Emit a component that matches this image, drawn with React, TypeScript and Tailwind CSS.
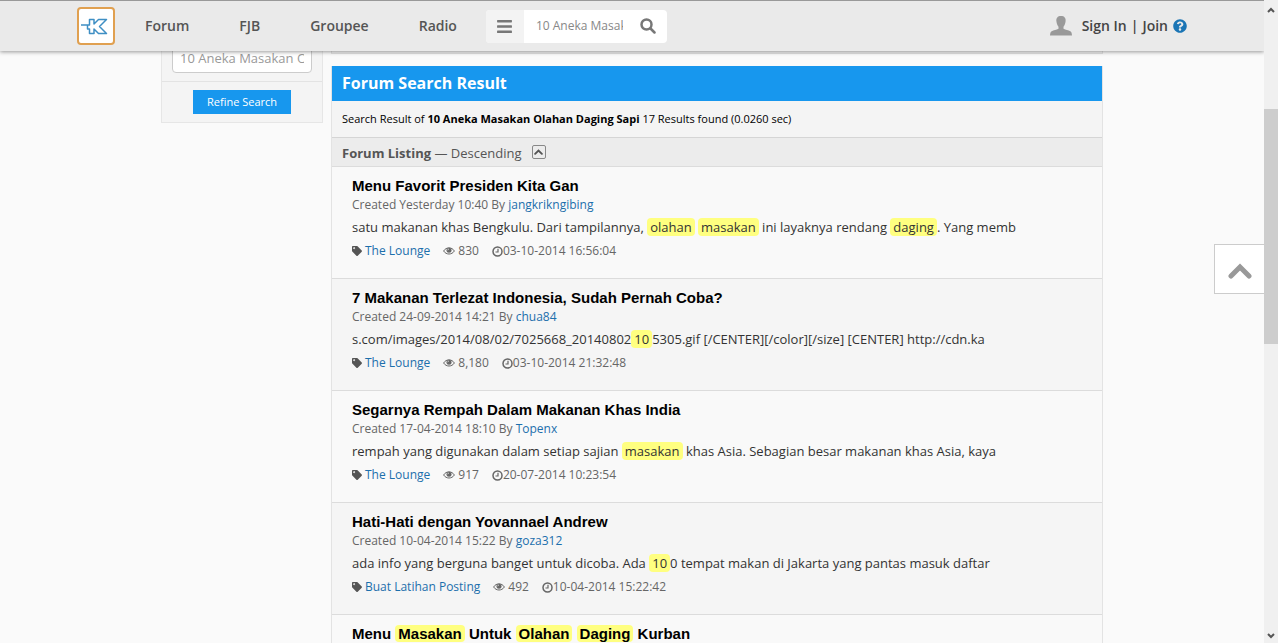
import React from 'react';
import { FaBars, FaQuestionCircle, FaTag } from 'react-icons/fa';

interface Thread {
  title: string;
  created: string;
  author: string;
  excerpt: string;
  forum: string;
  views: string;
  updated: string;
}

// words between [[ ]] are search hits
const threads: Thread[] = [
  {
    title: 'Menu Favorit Presiden Kita Gan',
    created: 'Yesterday 10:40',
    author: 'jangkrikngibing',
    excerpt:
      'satu makanan khas Bengkulu. Dari tampilannya, [[olahan]] [[masakan]] ini layaknya rendang [[daging]]. Yang memb',
    forum: 'The Lounge',
    views: '830',
    updated: '03-10-2014 16:56:04',
  },
  {
    title: '7 Makanan Terlezat Indonesia, Sudah Pernah Coba?',
    created: '24-09-2014 14:21',
    author: 'chua84',
    excerpt:
      's.com/images/2014/08/02/7025668_20140802[[10]]5305.gif [/CENTER][/color][/size] [CENTER] http://cdn.ka',
    forum: 'The Lounge',
    views: '8,180',
    updated: '03-10-2014 21:32:48',
  },
  {
    title: 'Segarnya Rempah Dalam Makanan Khas India',
    created: '17-04-2014 18:10',
    author: 'Topenx',
    excerpt:
      'rempah yang digunakan dalam setiap sajian [[masakan]] khas Asia. Sebagian besar makanan khas Asia, kaya',
    forum: 'The Lounge',
    views: '917',
    updated: '20-07-2014 10:23:54',
  },
  {
    title: 'Hati-Hati dengan Yovannael Andrew',
    created: '10-04-2014 15:22',
    author: 'goza312',
    excerpt:
      'ada info yang berguna banget untuk dicoba. Ada [[10]]0 tempat makan di Jakarta yang pantas masuk daftar',
    forum: 'Buat Latihan Posting',
    views: '492',
    updated: '10-04-2014 15:22:42',
  },
];

const Highlighted: React.FC<{ text: string }> = ({ text }) => (
  <>
    {text.split(/\[\[(.+?)\]\]/).map((part, i) =>
      i % 2 ? (
        <mark key={i} className="rounded-sm bg-[#ffff80] px-[3px] text-inherit">
          {part}
        </mark>
      ) : (
        <React.Fragment key={i}>{part}</React.Fragment>
      )
    )}
  </>
);

const Logo = () => (
  <svg viewBox="0 0 38 38" className="h-[38px] w-[38px]" fill="none">
    <rect x="1" y="1" width="36" height="36" rx="3" fill="#fff" stroke="#e0a050" strokeWidth="2" />
    <path
      d="M4 18h8.500v-5.500h4.500v4.500l4.500-4.500h8l-7 7 7 7h-8L17 22v4.500h-4.500v-4.500h-2V18"
      stroke="#3f8fc4"
      strokeWidth="1.500"
      strokeLinejoin="round"
    />
  </svg>
);

const UserIcon = () => (
  <svg viewBox="0 0 22 20" className="h-5 w-[22px]" fill="#999">
    <path d="M11 0c3.300 0 5 2 4.600 5.300C15.300 8 14.500 9.600 13.500 10.700v2c2 1 5 1.500 6.800 2.600 1 .6 1.500 1.500 1.700 4.200H0c.2-2.700.7-3.600 1.700-4.200 1.800-1.100 4.800-1.600 6.800-2.600v-2C7.500 9.600 6.700 8 6.400 5.300 6 2 7.700 0 11 0z" />
  </svg>
);

const SearchIcon = () => (
  <svg viewBox="0 0 16 16" className="h-4 w-4" fill="none" stroke="currentColor" strokeLinecap="round">
    <circle cx="6.500" cy="6.500" r="5" strokeWidth="2.500" />
    <path d="M10.500 10.500l4 4" strokeWidth="2.500" />
  </svg>
);

const EyeIcon = () => (
  <svg viewBox="0 0 12 10" className="mr-[3px] h-[10px] w-3" fill="none" stroke="currentColor">
    <path d="M.6 5C3.200.8 8.800.8 11.400 5 8.800 9 3.200 9 .6 5z" />
    <circle cx="6" cy="4.300" r="2.500" fill="currentColor" stroke="none" />
    <path d="M4.700 4.300A1.300 1.300 0 0 1 6 3" stroke="#fff" strokeWidth=".6" />
  </svg>
);

const ClockIcon = () => (
  <svg viewBox="0 0 11 11" className="h-[11px] w-[11px]" fill="none" stroke="currentColor" strokeWidth="1.500">
    <circle cx="5.500" cy="5.500" r="4.500" />
    <path d="M6 2.800v3.200H3.500" strokeWidth="1.200" />
  </svg>
);

const Chevron: React.FC<{ className: string }> = ({ className }) => (
  <svg
    viewBox="0 0 24 16"
    className={className}
    fill="none"
    stroke="currentColor"
    strokeWidth="5"
    strokeLinecap="round"
    strokeLinejoin="miter"
  >
    <path d="M3 13l9-9 9 9" />
  </svg>
);

const Header = () => (
  <header className="relative z-10 border-t border-[#999] bg-[#eaeaea] shadow-[0_1px_4px_rgba(0,0,0,0.4)]">
    <div className="mx-auto flex h-[50px] max-w-[1110px] items-center">
      <a href="#home" aria-label="Home">
        <Logo />
      </a>
      <nav className="ml-[30px] flex gap-[50px] text-sm font-semibold text-[#555]">
        <a href="#forum">Forum</a>
        <a href="#fjb">FJB</a>
        <a href="#groupee">Groupee</a>
        <a href="#radio">Radio</a>
      </nav>
      <form className="ml-[29px] flex h-[33px] items-center overflow-hidden rounded-sm bg-white">
        <button
          type="button"
          aria-label="Categories"
          className="flex h-full w-[38px] items-center justify-center bg-[#f3f3f3] text-[#777]"
        >
          <FaBars className="h-[17px] w-[17px]" />
        </button>
        <input
          aria-label="Search"
          defaultValue="10 Aneka Masakan Olahan Daging Sapi"
          className="ml-3 w-[87px] text-xs text-[#888] outline-none"
        />
        <button type="button" aria-label="Submit search" className="mr-[11px] ml-[17px] text-[#777]">
          <SearchIcon />
        </button>
      </form>
      <div className="ml-auto flex items-center text-sm font-semibold text-[#444]">
        <UserIcon />
        <a href="#signin" className="ml-[10px]">
          Sign In
        </a>
        <span className="mx-1">|</span>
        <a href="#join">Join</a>
        <a href="#help" aria-label="Help" className="ml-[5px] text-[#1b75b5]">
          <FaQuestionCircle className="h-[14px] w-[14px]" />
        </a>
      </div>
    </div>
  </header>
);

const Sidebar = () => (
  <aside className="-mt-[12px] w-[162px] shrink-0 self-start border border-t-0 border-[#e6e6e6] bg-[#f4f4f4]">
    <div className="border-b border-[#e3e3e3] px-[10px] pt-1 pb-2">
      <input
        aria-label="Keyword"
        defaultValue="10 Aneka Masakan Olahan Daging Sapi"
        className="h-[30px] w-full rounded-sm border border-[#ccc] bg-white px-[7px] text-[13px] text-[#999] outline-none"
      />
    </div>
    <div className="flex justify-center py-2">
      <button type="button" className="h-6 bg-[#1797ee] px-[14px] text-[11px] text-white">
        Refine Search
      </button>
    </div>
  </aside>
);

const ThreadItem: React.FC<{ thread: Thread }> = ({ thread }) => (
  <li className="h-[112px] border-t border-[#dcdcdc] bg-[#f9f9f9] px-5 pt-[10px] text-xs text-[#666] even:bg-[#f5f5f5]">
    <h3 className="font-['Liberation_Sans',Arial,sans-serif] text-[15px] leading-[18px] font-bold text-black">
      <a href="#thread">
        <Highlighted text={thread.title} />
      </a>
    </h3>
    <p className="leading-[20px]">
      Created {thread.created} By{' '}
      <a href="#author" className="text-[#1c6fac]">
        {thread.author}
      </a>
    </p>
    <p className="text-[13px] leading-6 whitespace-nowrap text-[#333]">
      <Highlighted text={thread.excerpt} />
    </p>
    <div className="flex leading-[24px]">
      <a href="#category" className="flex items-center text-[#1c6fac]">
        <FaTag className="mr-[3px] h-[10px] w-[10px] text-[#555]" />
        {thread.forum}
      </a>
      <span className="ml-[13px] flex items-center">
        <EyeIcon />
        {thread.views}
      </span>
      <span className="ml-[13px] flex items-center">
        <ClockIcon />
        {thread.updated}
      </span>
    </div>
  </li>
);

const Results = () => (
  <main className="min-w-0 flex-1">
    <div className="mb-3 h-[3px] border-x border-b border-[#e3e3e3] bg-[#f3f3f3]" />
    <div className="border-x border-[#e3e3e3]">
      <h1 className="h-[35px] bg-[#1797ee] px-[10px] text-[16px] leading-[35px] font-bold text-white">
        Forum Search Result
      </h1>
      <p className="h-9 bg-[#f4f4f4] px-[10px] text-[11px] leading-9 text-black">
        Search Result of <b>10 Aneka Masakan Olahan Daging Sapi</b> 17 Results found (0.0260 sec)
      </p>
      <div className="flex h-[29px] items-center border-t border-[#d5d5d5] bg-[#ececec] px-[10px] text-[13px] leading-[28px] text-[#555]">
        <h2 className="pt-px">
          <b>Forum Listing</b> — Descending
        </h2>
        <button
          type="button"
          aria-label="Toggle sort order"
          className="ml-[10px] flex h-[14px] w-[14px] items-center justify-center rounded-xs border border-[#888]"
        >
          <Chevron className="h-[6px] w-[9px]" />
        </button>
      </div>
      <ul>
        {threads.map((thread) => (
          <ThreadItem key={thread.title} thread={thread} />
        ))}
        <li className="border-t border-[#dcdcdc] bg-[#f9f9f9] px-5 pt-[10px]">
          <h3 className="font-['Liberation_Sans',Arial,sans-serif] text-[15px] leading-[18px] font-bold text-black">
            <a href="#thread">
              <Highlighted text="Menu [[Masakan]] Untuk [[Olahan]] [[Daging]] Kurban" />
            </a>
          </h3>
        </li>
      </ul>
    </div>
  </main>
);

const Scrollbar = () => (
  <div className="flex w-[14px] shrink-0 flex-col items-center bg-[#f0f0f0] text-[#555]">
    <svg viewBox="0 0 8 6" className="mt-[7px] h-[6px] w-2" fill="none" stroke="currentColor" strokeWidth="2">
      <path d="M1 5l3-3 3 3" />
    </svg>
    <div className="mt-24 h-[235px] w-full bg-[#cdcdcd]" />
    <svg viewBox="0 0 8 6" className="mt-auto mb-1 h-[6px] w-2" fill="none" stroke="currentColor" strokeWidth="2">
      <path d="M1 1l3 3 3-3" />
    </svg>
  </div>
);

export default function App() {
  return (
    <div className="flex h-screen overflow-hidden bg-[#fafafa] font-['Open_Sans',sans-serif]">
      <div className="relative min-w-0 flex-1 overflow-hidden">
        <Header />
        <div className="mx-auto flex max-w-[942px] gap-2">
          <Sidebar />
          <Results />
        </div>
        <a
          href="#top"
          aria-label="Back to top"
          className="absolute top-[244px] right-0 flex h-[50px] w-[50px] items-center justify-center border border-r-0 border-[#ccc] bg-white pt-1 text-[#999]"
        >
          <Chevron className="h-4 w-6" />
        </a>
      </div>
      <Scrollbar />
    </div>
  );
}
